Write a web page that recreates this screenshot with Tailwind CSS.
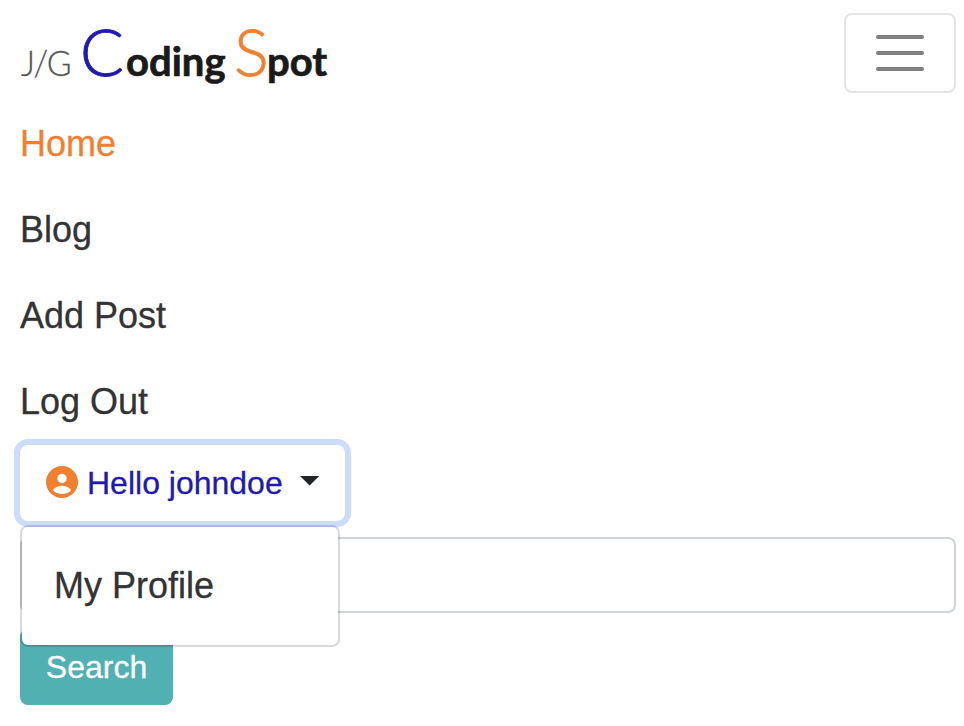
<!DOCTYPE html>
<html lang="en">
<head>
<meta charset="utf-8">
<title>Coding Spot</title>
<script src="https://cdn.jsdelivr.net/npm/@tailwindcss/browser@4"></script>
</head>
<body class="bg-white font-['Liberation_Sans',Arial,sans-serif] text-[#333336] overflow-hidden [-webkit-text-stroke:0.3px]">
<nav class="relative h-[726px] w-[964px] pl-5 pr-2 pt-[13px]">
  <div class="flex h-20 items-start justify-between">
    <a class="flex items-baseline whitespace-pre font-['Lato',sans-serif] leading-[77px] text-[#1a1a1b]"><span class="ml-px w-[59px] origin-left scale-x-[0.94] text-[36px] font-light tracking-[-1.5px] text-[#555]">J/G</span><span class="w-[46px] text-[65px] font-light text-[#1f1aaf] [-webkit-text-stroke:0.9px]">C</span><span class="w-[108px] text-[40px] font-bold [-webkit-text-stroke:0.7px]">oding</span><span class="w-[33px] text-[65px] font-light text-[#f08030] [-webkit-text-stroke:0.8px]">S</span><span class="text-[40px] font-bold [-webkit-text-stroke:0.7px]">pot</span></a>
    <button class="flex h-20 w-28 items-center justify-center rounded-lg border-2 border-[#e5e5e5]" aria-label="Menu">
      <svg class="h-[60px] w-[60px]" viewBox="0 0 30 30" fill="none" stroke="#808080" stroke-width="2" stroke-linecap="round" stroke-miterlimit="10"><path d="M4 7h22M4 15h22M4 23h22"/></svg>
    </button>
  </div>
  <ul class="pt-2 text-[36px] leading-[54px]">
    <li class="h-[86px] pt-4 text-[#f08030]">Home</li>
    <li class="h-[86px] pt-4">Blog</li>
    <li class="h-[86px] pt-4">Add Post</li>
    <li class="h-[86px] pt-4">Log Out</li>
  </ul>
  <div class="relative h-[76px]">
    <button class="flex h-[76px] w-[325px] items-center rounded-lg pl-[26px] text-[32px] text-[#1f1aaf] ring-6 ring-[#cbdcfe]">
      <svg class="mb-0.5 h-8 w-8" viewBox="0 0 32 32"><circle cx="16" cy="16" r="16" fill="#f08030"/><circle cx="16" cy="12.5" r="4.7" fill="#fff"/><path fill="#fff" d="M7 24.2C8.8 21.4 12 19.8 16 19.8s7.200 1.600 9 4.400C22.800 26.700 19.600 28 16 28s-6.800-1.300-9-3.800"/></svg>
      <span class="ml-[9px]">Hello johndoe</span>
      <svg class="mb-1 ml-[17px] h-[9.6px] w-[19.2px]" viewBox="0 0 19.2 9.6"><path d="M0 0h19.2L9.6 9.6z" fill="#212529"/></svg>
    </button>
    <div class="absolute left-0 top-20 z-10 flex h-[122px] w-80 items-center rounded-lg border-2 border-black/15 bg-white bg-clip-padding pl-8 text-[36px]">My Profile</div>
  </div>
  <form class="pt-4">
    <input class="block h-19 w-full rounded-lg border-2 border-[#ced4da]" aria-label="Search">
    <button class="mt-4 h-19 w-[153px] rounded-lg bg-[#51b0b2] text-[32px] text-white">Search</button>
  </form>
</nav>
</body>
</html>
